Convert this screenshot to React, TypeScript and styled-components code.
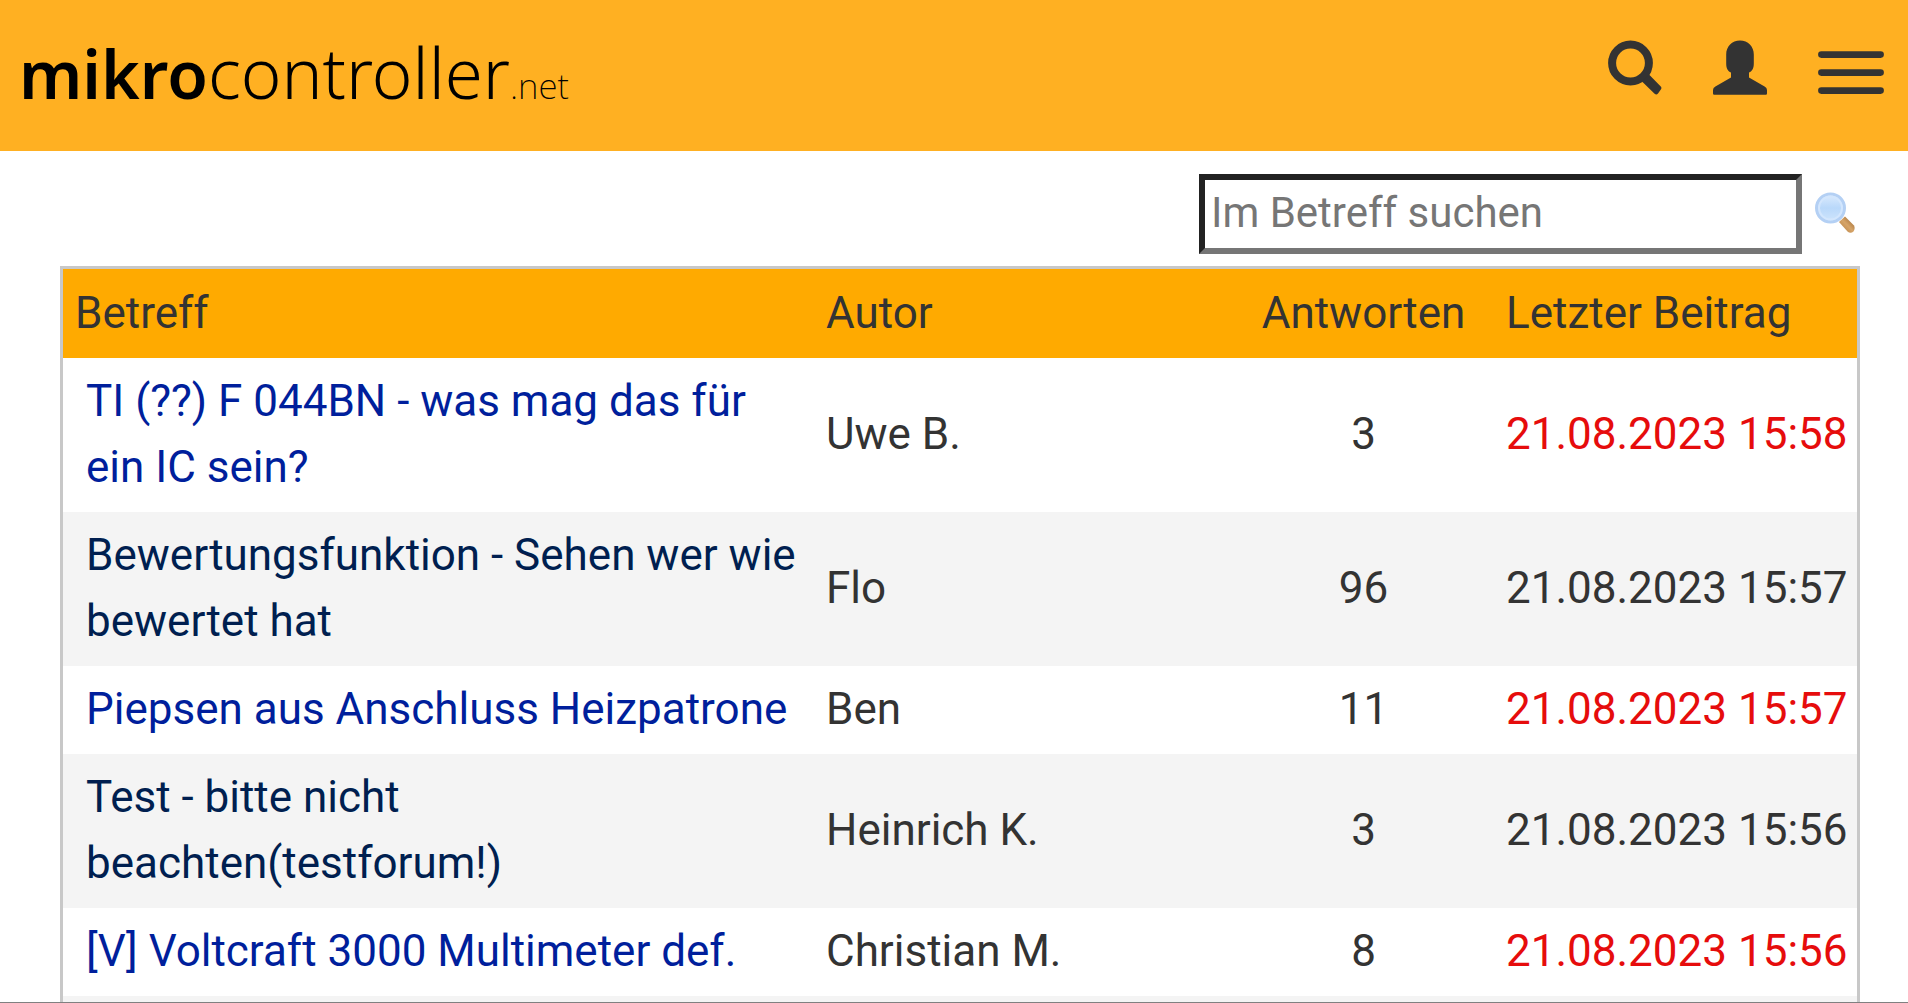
import React from "react";
import styled, { createGlobalStyle } from "styled-components";

const GlobalStyle = createGlobalStyle`
  *, *::before, *::after { box-sizing: border-box; }
  body {
    margin: 0;
    background: #fff;
    color: #333;
    font-family: Roboto, "Liberation Sans", sans-serif;
    font-size: 44px;
    line-height: 66px;
  }
`;

const Page = styled.div`
  height: 100vh;
  overflow: hidden;
  border-bottom: 1px solid #808080;
`;

const TopBar = styled.header`
  display: flex;
  justify-content: space-between;
  align-items: flex-start;
  min-height: 151px;
  padding: 40px 24px 32px 19px;
  background: #ffb022;
`;

const Logo = styled.a`
  display: flex;
  align-items: baseline;
  color: #000;
  text-decoration: none;
  font-family: "Noto Sans", sans-serif;
  font-size: 66px;
  line-height: 64px;
`;

const LogoStrong = styled.span`
  font-weight: 600;
`;

const LogoLight = styled.span`
  font-size: 69px;
  font-weight: 300;
`;

const LogoSuffix = styled.span`
  font-size: 35px;
  font-weight: 200;
`;

const Tools = styled.nav`
  display: flex;
  gap: 51px;
`;

const IconButton = styled.button`
  display: block;
  padding: 0;
  border: 0;
  background: none;
  line-height: 0;
  cursor: pointer;
`;

const Main = styled.main`
  padding: 23px 48px 0 60px;
`;

const SearchForm = styled.form`
  display: flex;
  justify-content: flex-end;
  align-items: center;
  gap: 13px;
  padding-right: 5px;
  margin-bottom: 12px;
`;

const SearchInput = styled.input`
  width: 603px;
  height: 80px;
  padding: 0 6px 4px;
  border: 6px solid;
  border-color: #222 #767676 #767676 #222;
  background: #fff;
  color: #333;
  font: inherit;
  font-size: 42px;
  &::placeholder { color: #767676; opacity: 1; }
`;

const Table = styled.table`
  width: 100%;
  table-layout: fixed;
  border: 3px solid #c8c8c8;
  border-collapse: separate;
  border-spacing: 0;
`;

const Col = styled.col<{ $width?: number }>`
  width: ${(p) => (p.$width ? `${p.$width}px` : "auto")};
`;

const HeadCell = styled.th<{ $center?: boolean }>`
  padding: 11px 11px 12px 12px;
  background: #fa0;
  font-weight: 400;
  text-align: ${(p) => (p.$center ? "center" : "left")};
  white-space: nowrap;
`;

const Row = styled.tr`
  height: 88px;
  &:nth-child(even) { background: #f4f4f4; }
`;

const Cell = styled.td<{ $center?: boolean; $fresh?: boolean }>`
  padding: 10px 11px 12px 12px;
  vertical-align: middle;
  white-space: nowrap;
  text-align: ${(p) => (p.$center ? "center" : "left")};
  color: ${(p) => (p.$fresh ? "#e60c0c" : "inherit")};
`;

const SubjectCell = styled(Cell)`
  padding-left: 23px;
  white-space: normal;
`;

const Subject = styled.a<{ $fresh: boolean }>`
  color: ${(p) => (p.$fresh ? "#001f9c" : "#001f50")};
  text-decoration: none;
`;

type Thread = {
  subject: string;
  author: string;
  replies: number;
  date: string;
  fresh: boolean;
};

const threads: Thread[] = [
  { subject: "TI (??) F 044BN - was mag das für ein IC sein?", author: "Uwe B.", replies: 3, date: "21.08.2023 15:58", fresh: true },
  { subject: "Bewertungsfunktion - Sehen wer wie bewertet hat", author: "Flo", replies: 96, date: "21.08.2023 15:57", fresh: false },
  { subject: "Piepsen aus Anschluss Heizpatrone", author: "Ben", replies: 11, date: "21.08.2023 15:57", fresh: true },
  { subject: "Test - bitte nicht beachten(testforum!)", author: "Heinrich K.", replies: 3, date: "21.08.2023 15:56", fresh: false },
  { subject: "[V] Voltcraft 3000 Multimeter def.", author: "Christian M.", replies: 8, date: "21.08.2023 15:56", fresh: true },
];

const SearchIcon = () => (
  <svg width="55" height="56" viewBox="0 0 55 56" aria-hidden="true">
    <circle cx="23.5" cy="23" r="18.4" fill="none" stroke="#333" strokeWidth="8" />
    <path d="M35 41.5 L42 34.5 L54 46.8 Q55 47.9 54 49.2 L51 53.6 Q49.4 55.4 47.6 53.8 Z" fill="#333" />
  </svg>
);

const UserIcon = () => (
  <svg width="54" height="56" viewBox="0 0 54 56" aria-hidden="true">
    <path
      d="M27 .6 C35 .6 40.8 6.6 40.8 14.5 V23.5 C40.8 28 39.4 31.4 36 32.4 V37.4 L51.6 46.4 Q54 47.8 54 50 V53.6 Q54 54.8 52.8 54.8 H1.2 Q0 54.8 0 53.6 V50 Q0 47.8 2.4 46.4 L18 37.4 V32.4 C14.6 31.4 13.2 28 13.2 23.5 V14.5 C13.2 6.6 19 .6 27 .6 Z"
      fill="#333"
    />
  </svg>
);

const MenuIcon = () => (
  <svg width="66" height="56" viewBox="0 0 66 56" aria-hidden="true">
    <path d="M3.4 14.6 H62.6 M3.4 32.6 H62.6 M3.4 50.6 H62.6" stroke="#333" strokeWidth="6.6" strokeLinecap="round" />
  </svg>
);

const LensIcon = () => (
  <svg width="40" height="44" viewBox="0 0 40 44" aria-hidden="true">
    <defs>
      <linearGradient id="glass" x1="0" y1="0" x2="0" y2="1">
        <stop offset="0" stopColor="#dcebfd" />
        <stop offset=".5" stopColor="#b9d8fa" />
        <stop offset="1" stopColor="#cfe5fc" />
      </linearGradient>
      <linearGradient id="grip" x1="0" y1="1" x2="1" y2="0">
        <stop offset="0" stopColor="#b07a3c" />
        <stop offset=".5" stopColor="#d6a468" />
        <stop offset="1" stopColor="#8f5a24" />
      </linearGradient>
    </defs>
    <path d="M24 30 L30 24.5 L39 33.5 Q40.5 36.5 38.5 39.5 Q35.5 42 32.5 39.5 Z" fill="url(#grip)" />
    <circle cx="15.5" cy="16" r="14" fill="url(#glass)" stroke="#b4d0f4" strokeWidth="3" />
    <circle cx="15.5" cy="16" r="11.5" fill="none" stroke="#d3e6fd" strokeWidth="2" />
  </svg>
);

export default function App() {
  return (
    <>
      <GlobalStyle />
      <Page>
        <TopBar>
          <Logo href="#">
            <LogoStrong>mikro</LogoStrong>
            <LogoLight>controller</LogoLight>
            <LogoSuffix>.net</LogoSuffix>
          </Logo>
          <Tools>
            <IconButton type="button" aria-label="Suche"><SearchIcon /></IconButton>
            <IconButton type="button" aria-label="Benutzer"><UserIcon /></IconButton>
            <IconButton type="button" aria-label="Menü"><MenuIcon /></IconButton>
          </Tools>
        </TopBar>
        <Main>
          <SearchForm onSubmit={(e) => e.preventDefault()}>
            <SearchInput type="text" placeholder="Im Betreff suchen" aria-label="Im Betreff suchen" />
            <IconButton type="submit" aria-label="Suchen"><LensIcon /></IconButton>
          </SearchForm>
          <Table>
            <colgroup>
              <Col />
              <Col $width={418} />
              <Col $width={262} />
              <Col $width={363} />
            </colgroup>
            <thead>
              <tr>
                <HeadCell scope="col">Betreff</HeadCell>
                <HeadCell scope="col">Autor</HeadCell>
                <HeadCell scope="col" $center>Antworten</HeadCell>
                <HeadCell scope="col">Letzter Beitrag</HeadCell>
              </tr>
            </thead>
            <tbody>
              {threads.map((t) => (
                <Row key={t.subject}>
                  <SubjectCell><Subject href="#" $fresh={t.fresh}>{t.subject}</Subject></SubjectCell>
                  <Cell>{t.author}</Cell>
                  <Cell $center>{t.replies}</Cell>
                  <Cell $fresh={t.fresh}>{t.date}</Cell>
                </Row>
              ))}
              <Row><Cell colSpan={4} /></Row>
            </tbody>
          </Table>
        </Main>
      </Page>
    </>
  );
}
